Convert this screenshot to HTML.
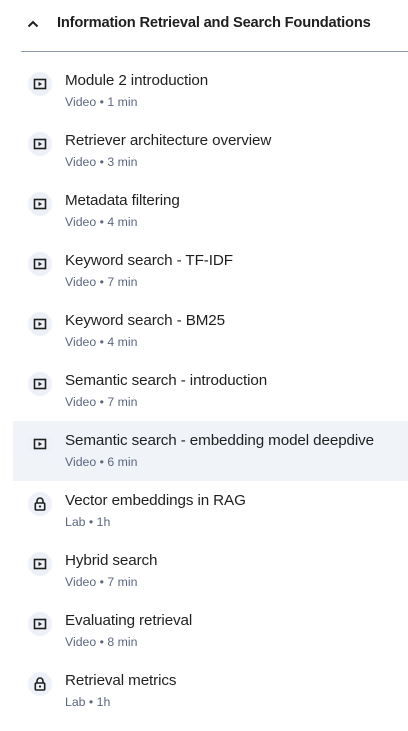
<!DOCTYPE html><html><head><style>
body{margin:0;width:408px;height:731px;background:#fff;font-family:"Liberation Sans",sans-serif;position:relative;overflow:hidden}
.h{position:absolute;left:57px;top:15px;font-size:14.7px;font-weight:bold;color:#1f1f1f;letter-spacing:-0.2px}
.chev{position:absolute;left:27px;top:19px}
.line{position:absolute;left:21px;right:0;top:51px;height:1px;background:#8a9bb3}
.row{position:absolute;left:13px;right:0;height:60px}
.row.hl{background:#f0f3f8}
.ic{position:absolute;left:15px;top:11px;width:24px;height:24px;border-radius:50%;background:#eef1f7}
.ic svg{position:absolute;left:4px;top:4px}
.t{position:absolute;left:52px;top:11px;font-size:15.2px;color:#1f1f1f;letter-spacing:-0.1px}
.s{position:absolute;left:52px;top:34px;font-size:12.3px;color:#5b6780}
</style></head><body>
<svg class="chev" width="12" height="9" viewBox="0 0 12 9"><path d="M1.5 7.5L6 3l4.5 4.5" fill="none" stroke="#1f1f1f" stroke-width="2"/></svg>
<div class="h">Information Retrieval and Search Foundations</div>
<div class="line"></div>
<div class="row" style="top:61px"><div class="ic"><svg width="16" height="16"><rect x="2.5" y="3.5" width="11" height="9" fill="none" stroke="#1f1f1f" stroke-width="1.6"/><path d="M6.5 5.8v4.4L10 8z" fill="#1f1f1f"/></svg></div><div class="t">Module 2 introduction</div><div class="s">Video • 1 min</div></div>
<div class="row" style="top:121px"><div class="ic"><svg width="16" height="16"><rect x="2.5" y="3.5" width="11" height="9" fill="none" stroke="#1f1f1f" stroke-width="1.6"/><path d="M6.5 5.8v4.4L10 8z" fill="#1f1f1f"/></svg></div><div class="t">Retriever architecture overview</div><div class="s">Video • 3 min</div></div>
<div class="row" style="top:181px"><div class="ic"><svg width="16" height="16"><rect x="2.5" y="3.5" width="11" height="9" fill="none" stroke="#1f1f1f" stroke-width="1.6"/><path d="M6.5 5.8v4.4L10 8z" fill="#1f1f1f"/></svg></div><div class="t">Metadata filtering</div><div class="s">Video • 4 min</div></div>
<div class="row" style="top:241px"><div class="ic"><svg width="16" height="16"><rect x="2.5" y="3.5" width="11" height="9" fill="none" stroke="#1f1f1f" stroke-width="1.6"/><path d="M6.5 5.8v4.4L10 8z" fill="#1f1f1f"/></svg></div><div class="t">Keyword search - TF-IDF</div><div class="s">Video • 7 min</div></div>
<div class="row" style="top:301px"><div class="ic"><svg width="16" height="16"><rect x="2.5" y="3.5" width="11" height="9" fill="none" stroke="#1f1f1f" stroke-width="1.6"/><path d="M6.5 5.8v4.4L10 8z" fill="#1f1f1f"/></svg></div><div class="t">Keyword search - BM25</div><div class="s">Video • 4 min</div></div>
<div class="row" style="top:361px"><div class="ic"><svg width="16" height="16"><rect x="2.5" y="3.5" width="11" height="9" fill="none" stroke="#1f1f1f" stroke-width="1.6"/><path d="M6.5 5.8v4.4L10 8z" fill="#1f1f1f"/></svg></div><div class="t">Semantic search - introduction</div><div class="s">Video • 7 min</div></div>
<div class="row hl" style="top:421px"><div class="ic"><svg width="16" height="16"><rect x="2.5" y="3.5" width="11" height="9" fill="none" stroke="#1f1f1f" stroke-width="1.6"/><path d="M6.5 5.8v4.4L10 8z" fill="#1f1f1f"/></svg></div><div class="t">Semantic search - embedding model deepdive</div><div class="s">Video • 6 min</div></div>
<div class="row" style="top:481px"><div class="ic"><svg width="16" height="16"><path d="M5 7V5a3 3 0 0 1 6 0v2" fill="none" stroke="#1f1f1f" stroke-width="1.6"/><rect x="3.3" y="7" width="9.4" height="7" rx="1" fill="none" stroke="#1f1f1f" stroke-width="1.6"/><circle cx="8" cy="10.5" r="1.1" fill="#1f1f1f"/></svg></div><div class="t">Vector embeddings in RAG</div><div class="s">Lab • 1h</div></div>
<div class="row" style="top:541px"><div class="ic"><svg width="16" height="16"><rect x="2.5" y="3.5" width="11" height="9" fill="none" stroke="#1f1f1f" stroke-width="1.6"/><path d="M6.5 5.8v4.4L10 8z" fill="#1f1f1f"/></svg></div><div class="t">Hybrid search</div><div class="s">Video • 7 min</div></div>
<div class="row" style="top:601px"><div class="ic"><svg width="16" height="16"><rect x="2.5" y="3.5" width="11" height="9" fill="none" stroke="#1f1f1f" stroke-width="1.6"/><path d="M6.5 5.8v4.4L10 8z" fill="#1f1f1f"/></svg></div><div class="t">Evaluating retrieval</div><div class="s">Video • 8 min</div></div>
<div class="row" style="top:661px"><div class="ic"><svg width="16" height="16"><path d="M5 7V5a3 3 0 0 1 6 0v2" fill="none" stroke="#1f1f1f" stroke-width="1.6"/><rect x="3.3" y="7" width="9.4" height="7" rx="1" fill="none" stroke="#1f1f1f" stroke-width="1.6"/><circle cx="8" cy="10.5" r="1.1" fill="#1f1f1f"/></svg></div><div class="t">Retrieval metrics</div><div class="s">Lab • 1h</div></div>
</body></html>
